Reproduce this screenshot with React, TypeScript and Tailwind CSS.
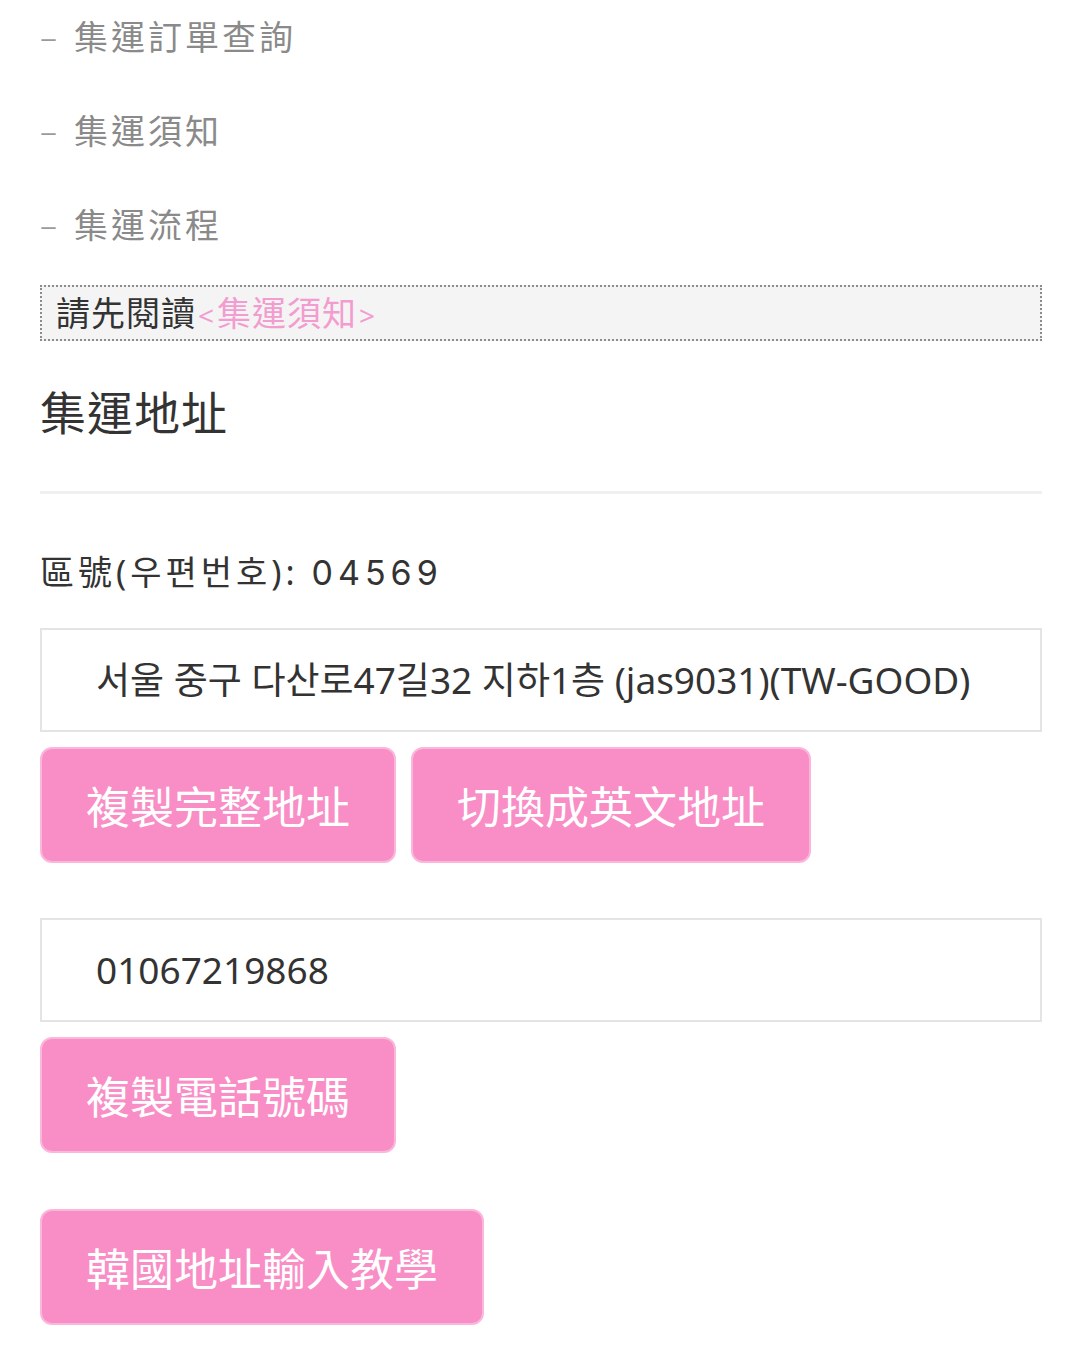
const cjk = "font-['Noto_Sans','Noto_Sans_CJK_TC',sans-serif]";

const navItems = ['集運訂單查詢', '集運須知', '集運流程'];

function PinkButton({ label }: { label: string }) {
  return (
    <button className="h-[116px] rounded-[12px] border-2 border-[#fbb6dc] bg-[#f98ec6] px-[44px] text-[44px] leading-none text-white font-['Noto_Sans_CJK_TC',sans-serif]">
      {label}
    </button>
  );
}

export default function App() {
  return (
    <div className="min-h-[1357px] bg-white pl-[40px] pt-[20px] pr-[38px]">
      {/* side menu links */}
      <ul className="flex flex-col gap-[60px]">
        {navItems.map((item) => (
          <li key={item} className={`flex items-center h-[34px] text-[34px] leading-none text-[#8a8a8a] tracking-[3px] ${cjk}`}>
            <span className="w-[34px] text-[#9a9a9a] font-light">–</span>
            <span>{item}</span>
          </li>
        ))}
      </ul>

      <div className={`mt-[43px] h-[56px] flex items-center border-2 border-dotted border-[#8c8c8c] bg-[#f4f4f4] pl-[14px] text-[34px] leading-none ${cjk}`}>
        <span className="text-[#333] tracking-[1px]">請先閱讀</span>
        <span className="text-[#f39ccf] tracking-[1px]">
          <span className="text-[28px] mx-[2px]">&lt;</span>集運須知<span className="text-[28px] mx-[2px]">&gt;</span>
        </span>
      </div>

      <h2 className={`mt-[48px] text-[46px] leading-none text-[#333] tracking-[1px] ${cjk}`}>集運地址</h2>

      <div className="mt-[56px] h-[3px] bg-[#f0f0f0]" />

      <p className={`mt-[61px] text-[34px] leading-none text-[#333] tracking-[4px] ${cjk}`}>
        區號(우편번호): <span className="tracking-[5px] font-['Inter',sans-serif]">04569</span>
      </p>

      <div className="mt-[38px] flex flex-col">
        <div className="h-[104px] flex items-center border-2 border-[#e4e4e4] pl-[54px] text-[37px] text-[#333] font-['Noto_Sans','Noto_Sans_CJK_KR',sans-serif]">
          서울 중구 다산로47길32 지하1층 (jas9031)(TW-GOOD)
        </div>
        <div className="mt-[15px] flex gap-[15px]">
          <PinkButton label="複製完整地址" />
          <PinkButton label="切換成英文地址" />
        </div>
      </div>

      <div className="mt-[55px] flex flex-col items-start">
        <div className="w-full h-[104px] flex items-center border-2 border-[#e4e4e4] pl-[54px] text-[37px] text-[#333] font-['Noto_Sans',sans-serif]">
          01067219868
        </div>
        <div className="mt-[15px]">
          <PinkButton label="複製電話號碼" />
        </div>
        <div className="mt-[56px]">
          <PinkButton label="韓國地址輸入教學" />
        </div>
      </div>
    </div>
  );
}
